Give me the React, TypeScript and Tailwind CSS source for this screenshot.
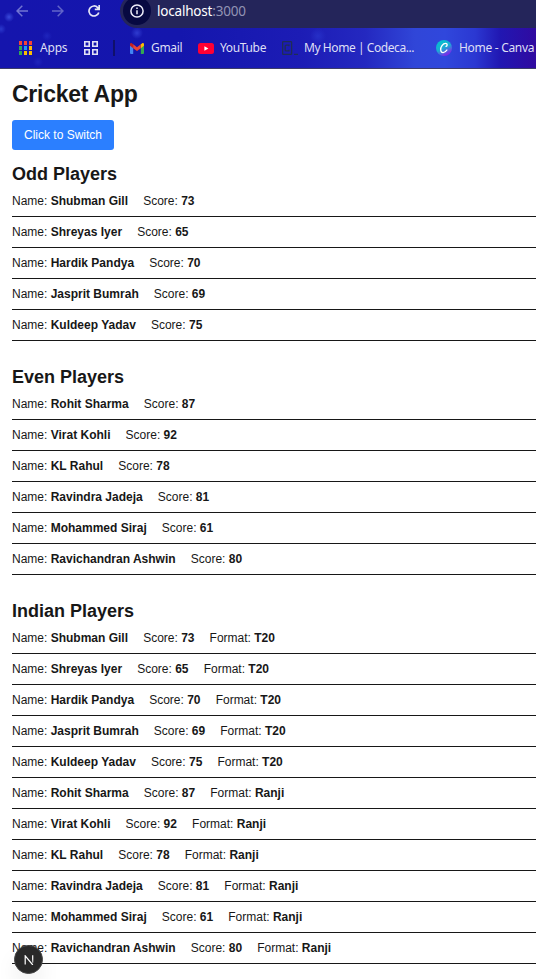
import React from 'react';

type Player = { name: string; score: number; format?: string };

const odd: Player[] = [
  { name: 'Shubman Gill', score: 73 },
  { name: 'Shreyas Iyer', score: 65 },
  { name: 'Hardik Pandya', score: 70 },
  { name: 'Jasprit Bumrah', score: 69 },
  { name: 'Kuldeep Yadav', score: 75 },
];

const even: Player[] = [
  { name: 'Rohit Sharma', score: 87 },
  { name: 'Virat Kohli', score: 92 },
  { name: 'KL Rahul', score: 78 },
  { name: 'Ravindra Jadeja', score: 81 },
  { name: 'Mohammed Siraj', score: 61 },
  { name: 'Ravichandran Ashwin', score: 80 },
];

const indian: Player[] = [
  ...odd.map((p) => ({ ...p, format: 'T20' })),
  ...even.map((p) => ({ ...p, format: 'Ranji' })),
];

function PlayerList({ title, players }: { title: string; players: Player[] }) {
  return (
    <section className="mb-6">
      <h2 className="text-[18px] leading-6 font-bold">{title}</h2>
      <ul>
        {players.map((p) => (
          <li key={p.name} className="border-b border-[#171717] py-1.5 text-xs leading-[18px] whitespace-nowrap">
            Name: <strong>{p.name}</strong>{' '}
            <span className="ml-[11.75px]">
              Score: <strong>{p.score}</strong>
            </span>
            {p.format && (
              <>
                {' '}
                <span className="ml-[11.75px]">
                  Format: <strong>{p.format}</strong>
                </span>
              </>
            )}
          </li>
        ))}
      </ul>
    </section>
  );
}

function AppsIcon() {
  const colors = ['#f44336', '#f44336', '#f44336', '#34a853', '#2196f3', '#fbbc05', '#34a853', '#fbbc05', '#fbbc05'];
  return (
    <svg width="13" height="14" viewBox="0 0 13 14" shapeRendering="crispEdges">
      {colors.map((c, i) => (
        <rect key={i} x={(i % 3) * 5} y={Math.floor(i / 3) * 5} width="3" height="4" fill={c} />
      ))}
    </svg>
  );
}

function BrowserChrome() {
  return (
    <header className="h-[69px] overflow-hidden border-b border-[#3d3d68] bg-[radial-gradient(circle_at_9px_17px,#3a4adb_0,transparent_5px),radial-gradient(circle_at_137px_33px,#2f3bcf_0,transparent_6px),radial-gradient(circle_at_1px_29px,#2a38cc_0,transparent_5px),radial-gradient(circle_at_47px_36px,#1f25bd_0,transparent_5px),radial-gradient(circle_at_38px_62px,#1f24bb_0,transparent_5px),radial-gradient(circle_at_318px_36px,#262fc7_0,transparent_8px),radial-gradient(ellipse_at_528px_26px,#5411ac_0,transparent_26px),linear-gradient(90deg,#1515ad_0,#1416ad_180px,#1c1cb5_300px,#2428c0_365px,#3046d8_415px,#3047dc_445px,#2b38d2_475px,#2117b2_500px,#300aa0_536px)] font-['Noto_Sans','Open_Sans',sans-serif]">
      <div className="flex h-7 items-start">
        <div className="flex w-[120px] shrink-0 gap-6 pt-[5px] pl-4">
          <svg width="12" height="12" viewBox="0 0 12 12" fill="none" stroke="#7275d2" strokeWidth="1.5">
            <path d="M12 6H1M6.3.7 1 6l5.3 5.3" />
          </svg>
          <svg width="12" height="12" viewBox="0 0 12 12" fill="none" stroke="#6265c9" strokeWidth="1.5">
            <path d="M0 6h11M5.7.7 11 6l-5.3 5.3" />
          </svg>
          <svg width="12" height="12" viewBox="0 0 12 12" fill="none" stroke="#e5e5f5" strokeWidth="1.7" className="shrink-0">
            <path d="M10.8 7.4A5 5 0 1 1 9.7 2.6L11 4M11.2 0v4.4H6.8" />
          </svg>
        </div>
        <div className="-mt-[6px] flex h-[34px] flex-1 items-center rounded-l-full bg-[#24255a]">
          <span className="ml-[3px] flex size-7 items-center justify-center rounded-full bg-[#070942]">
            <svg width="14" height="14" viewBox="0 0 14 14" fill="none" stroke="#eeeefa" strokeWidth="1.5">
              <circle cx="7" cy="7" r="6.1" />
              <path d="M7 6.2v4M7 3.5V5" />
            </svg>
          </span>
          <span className="ml-[6px] text-[13.5px] leading-[18px] tracking-[-0.2px] text-white">
            localhost<span className="text-[#9293b4]">:3000</span>
          </span>
        </div>
      </div>
      <nav className="flex h-10 items-center text-[12px] leading-none tracking-[-0.35px] whitespace-nowrap text-[#dedff5]">
        <span className="ml-[19px] flex"><AppsIcon /></span>
        <span className="ml-2 w-[44px] tracking-[-0.2px]">Apps</span>
        <svg width="14" height="14" viewBox="0 0 14 14" fill="none" stroke="#e3e3f5" strokeWidth="1.6">
          <path d="M.8.8h4.4v4.4H.8zM8.8.8h4.4v4.4H8.8zM.8 8.8h4.4v4.4H.8zM8.8 8.8h4.4v4.4H8.8z" />
        </svg>
        <span className="ml-[15px] h-4 w-0.5 bg-[#10106b]" />
        <svg className="ml-[15px]" width="14" height="11" viewBox="0 0 14 11">
          <path fill="#4285f4" d="M0 2v8a1 1 0 0 0 1 1h2.2V4z" />
          <path fill="#34a853" d="M14 2v8a1 1 0 0 1-1 1h-2.2V4z" />
          <path fill="#fbbc04" d="M10.8 1.3 12 .4c.8-.7 2-.1 2 1v1.4l-3.2 2.4z" />
          <path fill="#c5221f" d="M3.2 1.3 2 .4c-.8-.7-2-.1-2 1v1.4l3.2 2.4z" />
          <path fill="#ea4335" d="M3.2 1.3 7 4.2l3.8-2.9v3.9L7 8 3.2 5.2z" />
        </svg>
        <span className="ml-[7px] w-[47px]">Gmail</span>
        <svg width="16" height="11" viewBox="0 0 16 11">
          <rect width="16" height="11" rx="2.5" fill="#ff0033" />
          <path d="M6.4 3.2v4.6l4-2.3z" fill="white" />
        </svg>
        <span className="ml-[6px] w-[62px]">YouTube</span>
        <svg width="16" height="14" viewBox="0 0 16 14" fill="none" stroke="#1f2d55" strokeWidth="1.3">
          <rect x=".6" y=".6" width="9" height="12.8" rx="1" />
          <path d="M7 5.2V4.1H4.2q-1 0-1 1v3.8q0 1 1 1H7V8.8M12 13.3h4" />
        </svg>
        <span className="ml-[6px] w-[132px] tracking-[-0.43px]">My Home | Codeca...</span>
        <svg width="16" height="16" viewBox="0 0 16 16">
          <defs>
            <linearGradient id="canva" x1=".2" y1="0" x2=".75" y2="1">
              <stop stopColor="#00c4cc" />
              <stop offset=".5" stopColor="#1caad5" />
              <stop offset=".9" stopColor="#7d2ae8" />
            </linearGradient>
          </defs>
          <circle cx="8" cy="8" r="8" fill="url(#canva)" />
          <path d="M10.1 6.4c1.3-.6 1.6-3-.4-3-3 0-5.2 3.8-5 6.3.2 4.2 4.3 3.3 6.2.3" fill="none" stroke="white" strokeWidth="1.35" strokeLinecap="round" />
        </svg>
        <span className="ml-[7px] tracking-[-0.3px]">Home - Canva</span>
      </nav>
    </header>
  );
}

export default function App() {
  return (
    <div className="relative h-[979px] overflow-hidden bg-white font-['Liberation_Sans',Arial,sans-serif] text-[#171717]">
      <BrowserChrome />
      <main className="pt-3 pl-3">
        <h1 className="mb-3 text-[23px] leading-[27px] font-bold tracking-[-0.25px]">Cricket App</h1>
        <button className="mb-3 block h-[30px] rounded-[3px] bg-[#2b7fff] px-3 text-xs leading-[18px] text-white">
          Click to Switch
        </button>
        <PlayerList title="Odd Players" players={odd} />
        <PlayerList title="Even Players" players={even} />
        <PlayerList title="Indian Players" players={indian} />
      </main>
      <div className="absolute bottom-[5px] left-[14px] flex size-[29px] items-center justify-center rounded-full border border-[#454545] bg-[#292929] shadow-[0_12px_24px_-6px_rgba(0,0,0,0.18)]">
        <svg width="10" height="10" viewBox="0 0 10 10" fill="none" strokeWidth="1.2">
          <defs>
            <linearGradient id="stem" x1="0" y1="0" x2="0" y2="10" gradientUnits="userSpaceOnUse">
              <stop offset=".4" stopColor="white" />
              <stop offset="1" stopColor="#777" />
            </linearGradient>
          </defs>
          <path d="M1.2 9.5V.8L8.8 10" stroke="white" />
          <path d="M8.7.3v7.5" stroke="url(#stem)" />
        </svg>
      </div>
    </div>
  );
}
